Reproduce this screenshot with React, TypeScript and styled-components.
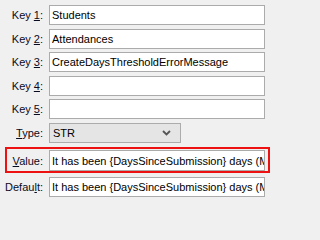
import React from 'react';
import { createGlobalStyle, styled } from 'styled-components';

const GlobalStyle = createGlobalStyle`
  html, body {
    margin: 0;
    padding: 0;
    background: #f0f0f0;
  }
  body {
    font-family: "Liberation Sans", Arial, sans-serif;
    font-size: 11px;
    color: #000;
  }
`;

interface FieldRow {
  label: string;
  accessKey: number;
  value: string;
}

const keyRows: FieldRow[] = [
  { label: 'Key 1:', accessKey: 4, value: 'Students' },
  { label: 'Key 2:', accessKey: 4, value: 'Attendances' },
  { label: 'Key 3:', accessKey: 4, value: 'CreateDaysThresholdErrorMessage' },
  { label: 'Key 4:', accessKey: 4, value: '' },
  { label: 'Key 5:', accessKey: 4, value: '' },
];

const message = 'It has been {DaysSinceSubmission} days (Max allowed {MaxDays})';

// underline the mnemonic character like a WinForms label
const Mnemonic: React.FC<{ text: string; at: number }> = ({ text, at }) => (
  <>
    {text.slice(0, at)}
    <u>{text[at]}</u>
    {text.slice(at + 1)}
  </>
);

const App: React.FC = () => {
  return (
    <>
      <GlobalStyle />
      <Form>
        {keyRows.map((row) => (
          <Row key={row.label}>
            <Label>
              <Mnemonic text={row.label} at={row.accessKey} />
            </Label>
            <TextBox readOnly value={row.value} />
          </Row>
        ))}
        <Row>
          <Label>
            <Mnemonic text="Type:" at={0} />
          </Label>
          <Combo>
            <span>STR</span>
            <svg width="9" height="6" viewBox="0 0 9 6">
              <path d="M1 1 L4.5 4.5 L8 1" fill="none" stroke="#555" strokeWidth="1.8" />
            </svg>
          </Combo>
        </Row>
        <HighlightRow>
          <Label>
            <Mnemonic text="Value:" at={0} />
          </Label>
          <TextBox readOnly value={message} />
        </HighlightRow>
        <Row>
          <Label>
            <Mnemonic text="Default:" at={5} />
          </Label>
          <TextBox readOnly value={message} />
        </Row>
      </Form>
    </>
  );
};

const Form = styled.div`
  display: flex;
  flex-direction: column;
  gap: 3.5px;
  padding: 5px 6px 0 0;
  width: 271px;
  box-sizing: border-box;
`;

const Row = styled.div`
  display: flex;
  align-items: center;
  gap: 6px;
  height: 20px;
`;

const HighlightRow = styled(Row)`
  position: relative;
  height: 21px;
  margin: 4px 0 2px;

  &::after {
    content: '';
    position: absolute;
    left: 5px;
    right: -5px;
    top: -3px;
    bottom: -2px;
    border: 2px solid #ee1111;
    pointer-events: none;
  }
`;

const Label = styled.label`
  width: 43px;
  flex: none;
  text-align: right;
  white-space: nowrap;
  color: #0a0a1e;

  u {
    text-underline-offset: 1px;
  }
`;

const TextBox = styled.input`
  flex: 1;
  min-width: 0;
  height: 100%;
  box-sizing: border-box;
  margin: 0;
  padding: 0 0 0 2px;
  border: 1px solid #ababab;
  background: #fff;
  font: inherit;
  color: #000;
  outline: none;
`;

const Combo = styled.div`
  width: 132px;
  height: 20px;
  box-sizing: border-box;
  display: flex;
  align-items: center;
  justify-content: space-between;
  padding: 0 9px 0 3px;
  border: 1px solid #acacac;
  background: #e5e5e5;
`;

export default App;
